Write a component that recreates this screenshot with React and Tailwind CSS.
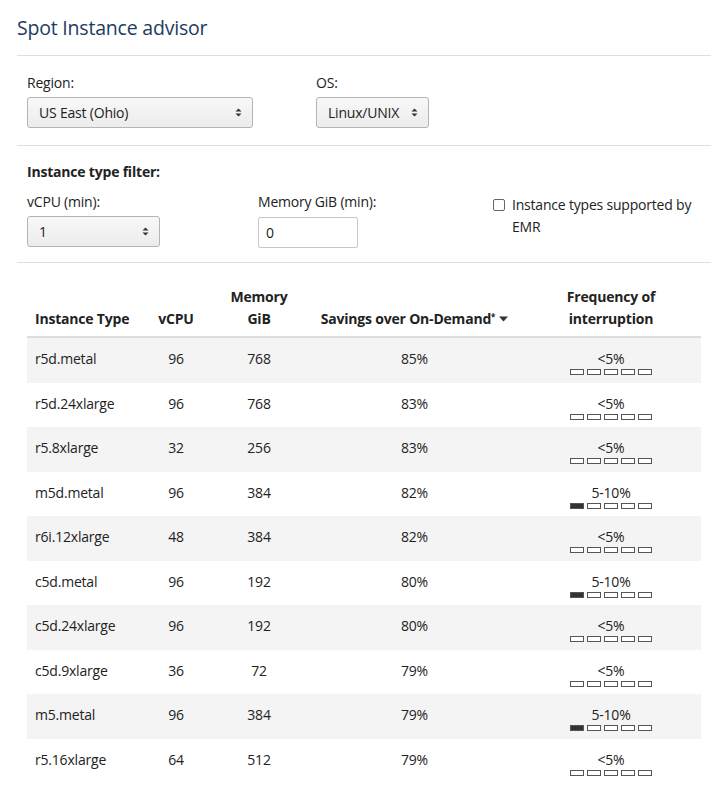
import React from "react";

const rows = [
  ["r5d.metal", 96, 768, "85%", "<5%", 0],
  ["r5d.24xlarge", 96, 768, "83%", "<5%", 0],
  ["r5.8xlarge", 32, 256, "83%", "<5%", 0],
  ["m5d.metal", 96, 384, "82%", "5-10%", 1],
  ["r6i.12xlarge", 48, 384, "82%", "<5%", 0],
  ["c5d.metal", 96, 192, "80%", "5-10%", 1],
  ["c5d.24xlarge", 96, 192, "80%", "<5%", 0],
  ["c5d.9xlarge", 36, 72, "79%", "<5%", 0],
  ["m5.metal", 96, 384, "79%", "5-10%", 1],
  ["r5.16xlarge", 64, 512, "79%", "<5%", 0],
];

function Arrows() {
  return (
    <svg width="7" height="9" viewBox="0 0 7 9" className="shrink-0">
      <path d="M0.5 3.5 L3.5 0.5 L6.5 3.5 Z" fill="#333" />
      <path d="M0.5 5.5 L3.5 8.5 L6.5 5.5 Z" fill="#333" />
    </svg>
  );
}

function Select({ value, className }) {
  return (
    <div
      className={
        "flex items-center justify-between h-[31px] rounded-[3px] border border-[#b4b4b4] bg-gradient-to-b from-[#f8f8f8] to-[#ececec] pl-[11px] pr-[10px] text-[14px] text-[#222] " +
        className
      }
    >
      <span>{value}</span>
      <Arrows />
    </div>
  );
}

function Bars({ filled }) {
  return (
    <div className="flex gap-[3px] justify-center mt-[1px]">
      {[0, 1, 2, 3, 4].map((i) => (
        <div
          key={i}
          className={
            "w-[14px] h-[6px] border border-[#555] " +
            (i < filled ? "bg-[#333]" : "bg-white")
          }
        />
      ))}
    </div>
  );
}

export default function App() {
  return (
    <div
      className="w-[726px] h-[791px] bg-white text-[#222] overflow-hidden tracking-[-0.2px]"
      style={{ fontFamily: '"Open Sans", "Noto Sans", sans-serif' }}
    >
      <div className="pl-[17px] pr-[15px]">
        <div className="h-[56px] flex items-center border-b border-[#dddddd]">
          <h1 className="text-[19.5px] text-[#1d3b5e] leading-none mt-[1px]">
            Spot Instance advisor
          </h1>
        </div>

        <div className="flex px-[10px] pt-[17px] pb-[17px] border-b border-[#dddddd]">
          <div className="w-[289px]">
            <div className="text-[14px] leading-[20px] mb-[4px]">Region:</div>
            <Select value="US East (Ohio)" className="w-[226px]" />
          </div>
          <div>
            <div className="text-[14px] leading-[20px] mb-[4px]">OS:</div>
            <Select value="Linux/UNIX" className="w-[113px] gap-[10px]" />
          </div>
        </div>

        <div className="px-[10px] pt-[16px] pb-[14px] border-b border-[#dddddd]">
          <div className="text-[14px] font-bold leading-[20px] mb-[10px]">
            Instance type filter:
          </div>
          <div className="flex">
            <div className="w-[231px]">
              <div className="text-[14px] leading-[20px] mb-[4px]">vCPU (min):</div>
              <Select value="1" className="w-[133px]" />
            </div>
            <div className="w-[235px]">
              <div className="text-[14px] leading-[20px] mb-[5px]">Memory GiB (min):</div>
              <div className="w-[100px] h-[31px] border border-[#c8c8c8] rounded-[2px] flex items-center pl-[7px] text-[14px]">
                0
              </div>
            </div>
            <div className="flex items-start pt-[5px]">
              <div className="w-[12px] h-[12px] border border-[#666] rounded-[2px] mt-[2px] mr-[7px] shrink-0" />
              <div className="text-[14px] leading-[22px] -mt-[3px]">
                Instance types supported by
                <br />
                EMR
              </div>
            </div>
          </div>
        </div>

        <div className="px-[10px] pt-[22px]">
          <div className="flex items-end h-[53px] border-b-2 border-[#dddddd] text-[14px] font-bold leading-[22px] pb-[6px]">
            <div className="w-[115px] pl-[8px]">Instance Type</div>
            <div className="w-[68px] text-center">vCPU</div>
            <div className="w-[98px] text-center">
              Memory
              <br />
              GiB
            </div>
            <div className="w-[213px] text-center flex items-center justify-center">
              <span>
                Savings over On-Demand<sup className="text-[8px]">*</sup>
              </span>
              <svg width="9" height="6" viewBox="0 0 9 6" className="ml-[4px]">
                <path d="M0 0.5 L9 0.5 L4.5 5.5 Z" fill="#333" />
              </svg>
            </div>
            <div className="w-[180px] text-center">
              Frequency of
              <br />
              interruption
            </div>
          </div>
          {rows.map((r, i) => (
            <div
              key={r[0]}
              className={
                "flex items-start pt-[12px] h-[44.5px] text-[14px] leading-[18px] " +
                (i % 2 === 0 ? "bg-[#f4f4f4]" : "bg-white")
              }
            >
              <div className="w-[115px] pl-[8px]">{r[0]}</div>
              <div className="w-[68px] text-center">{r[1]}</div>
              <div className="w-[98px] text-center">{r[2]}</div>
              <div className="w-[213px] text-center">{r[3]}</div>
              <div className="w-[180px] text-center">
                <div>{r[4]}</div>
                <Bars filled={r[5]} />
              </div>
            </div>
          ))}
        </div>
      </div>
    </div>
  );
}
